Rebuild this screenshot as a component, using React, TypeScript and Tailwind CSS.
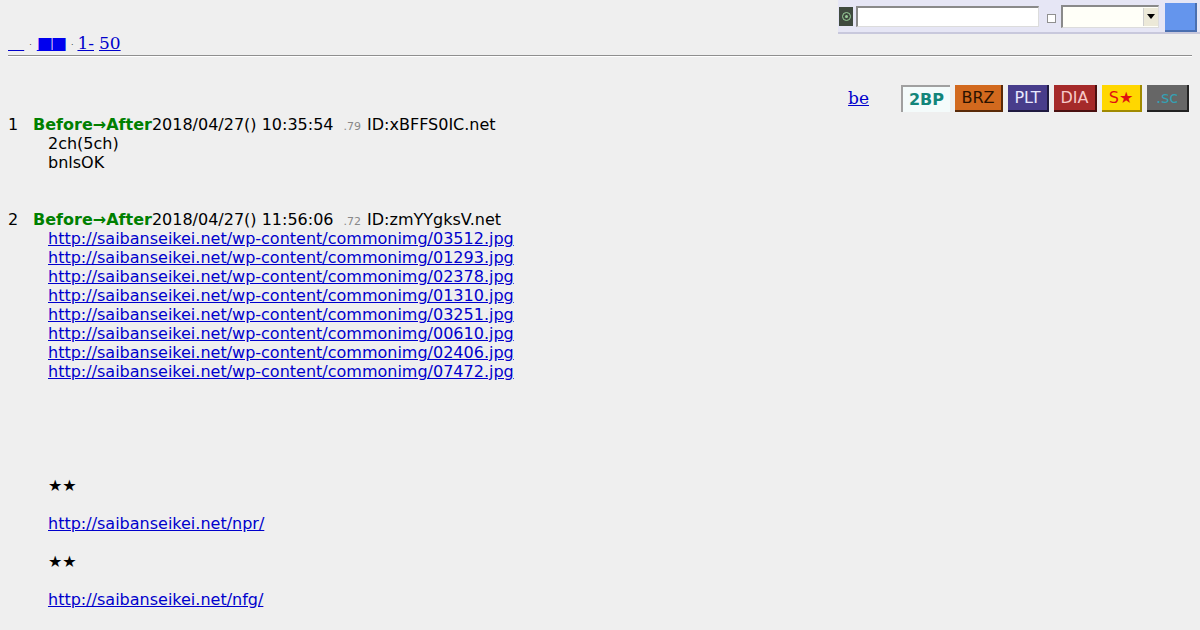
const links = [
  "03512",
  "01293",
  "02378",
  "01310",
  "03251",
  "00610",
  "02406",
  "07472",
];

const font = "font-['DejaVu_Sans',sans-serif]";

function TopPanel() {
  return (
    <div className="flex justify-end">
      <div className="flex items-center h-[34px] w-[362px] bg-[#e6e6f5] border-b-2 border-[#c8c8dc] pl-[1px]">
        <div className="w-[14px] h-[19px] bg-[#3f4a3f] flex items-center justify-center">
          <div className="w-[9px] h-[9px] rounded-full border border-[#9ad09a] flex items-center justify-center">
            <div className="w-[3px] h-[3px] rounded-full bg-[#9ad09a]" />
          </div>
        </div>
        <div className="ml-[3px] w-[183px] h-[21px] bg-white border-t-2 border-l-2 border-[#8a8a8a] border-b border-r border-b-[#dcdcdc] border-r-[#dcdcdc]" />
        <div className="ml-[8px] w-[9px] h-[9px] bg-white border border-[#909090] mt-[4px]" />
        <div className="ml-[5px] w-[98px] h-[23px] bg-[#fffff8] border-t-2 border-l-2 border-[#8a8a8a] border-b border-r border-b-[#dcdcdc] border-r-[#dcdcdc] flex justify-end items-center">
          <div className="w-[15px] h-[18px] bg-[#ece9d8] border-l border-[#cfcfcf] flex items-center justify-center">
            <div className="w-0 h-0 border-l-[4px] border-r-[4px] border-t-[5px] border-l-transparent border-r-transparent border-t-black" />
          </div>
        </div>
        <div className="ml-[6px] w-[32px] h-[29px] bg-[#6495ed] border-r-2 border-b-2 border-[#4a6fb0] self-start mt-[3px]" />
      </div>
    </div>
  );
}

function Nav() {
  return (
    <div className="font-['DejaVu_Serif',serif] text-[17px] leading-[18px] pl-[8px] text-[#0000cc] flex items-end h-[18px]">
      <span className="underline whitespace-pre">{"   "}</span>
      <span className="text-[8px] mx-[5px] text-black">.</span>
      <span className="underline tracking-[-2px] text-[#0000ee]">■■</span>
      <span className="text-[8px] mx-[4px] ml-[6px] text-black">.</span>
      <span className="underline">1-</span>
      <span className="ml-[5px] underline">50</span>
    </div>
  );
}

const btn = "h-[27px] flex items-center justify-center text-[16px]";

function Boards() {
  return (
    <div className="flex justify-end items-center pr-[11px] mt-[28px] h-[27px]">
      <span className="font-['DejaVu_Serif',serif] text-[17px] text-[#0000cc] underline mr-[32px]">be</span>
      <div className="flex gap-[5px]">
        <div className={`${btn} w-[49px] bg-[#f4fbfb] text-[#12857a] font-bold border-t-2 border-l-2 border-[#a0a0a0]`}>2BP</div>
        <div className={`${btn} w-[48px] bg-[#d2691e] text-[#2a1200] border-r-2 border-b-2 border-[#5a2a08]`}>BRZ</div>
        <div className={`${btn} w-[41px] bg-[#483d8b] text-[#e8e8ff] border-r-2 border-b-2 border-[#1f1a40]`}>PLT</div>
        <div className={`${btn} w-[43px] bg-[#a52a2a] text-[#f7c8c8] border-r-2 border-b-2 border-[#4a1010]`}>DIA</div>
        <div className={`${btn} w-[40px] bg-[#ffd700] text-[#e01010] border-r-2 border-b-2 border-[#a08a00]`}>S★</div>
        <div className={`${btn} w-[42px] bg-[#666666] text-[#34a0b4] border-r-2 border-b-2 border-[#222222]`}>.sc</div>
      </div>
    </div>
  );
}

function Header({ n, date, id, ip }: { n: number; date: string; id: string; ip: string }) {
  return (
    <div className="flex items-baseline h-[19px] overflow-visible">
      <span className="w-[25px]">{n}</span>
      <span className="font-bold text-[#008000]">Before→After</span>
      <span>{date}</span>
      <span className="ml-[10px] text-[11px] leading-[19px] text-[#888888]">{ip}</span>
      <span className="ml-[6px]">ID:{id}</span>
    </div>
  );
}

function A({ children }: { children: string }) {
  return <a className="text-[#0000cc] underline">{children}</a>;
}

export default function App() {
  return (
    <div className={`min-h-[630px] bg-[#efefef] text-black ${font} overflow-hidden`}>
      <TopPanel />
      <Nav />
      <div className="mx-[8px] mt-[3px] border-t border-[#8f8f8f] border-b border-b-white" />
      <Boards />
      <div className="pl-[8px] text-[16px] leading-[19px] mt-[3px]">
        <Header n={1} date="2018/04/27() 10:35:54" ip=".79" id="xBFFS0IC.net" />
        <div className="pl-[40px]">
          <div>2ch(5ch)</div>
          <div>bnlsOK</div>
          <div className="h-[38px]" />
        </div>
        <Header n={2} date="2018/04/27() 11:56:06" ip=".72" id="zmYYgksV.net" />
        <div className="pl-[40px] flex flex-col items-start">
          {links.map((l) => (
            <A key={l}>{`http://saibanseikei.net/wp-content/commonimg/${l}.jpg`}</A>
          ))}
          <div className="h-[95px]" />
          <div>★★</div>
          <div className="h-[19px]" />
          <A>http://saibanseikei.net/npr/</A>
          <div className="h-[19px]" />
          <div>★★</div>
          <div className="h-[19px]" />
          <A>http://saibanseikei.net/nfg/</A>
        </div>
      </div>
    </div>
  );
}
